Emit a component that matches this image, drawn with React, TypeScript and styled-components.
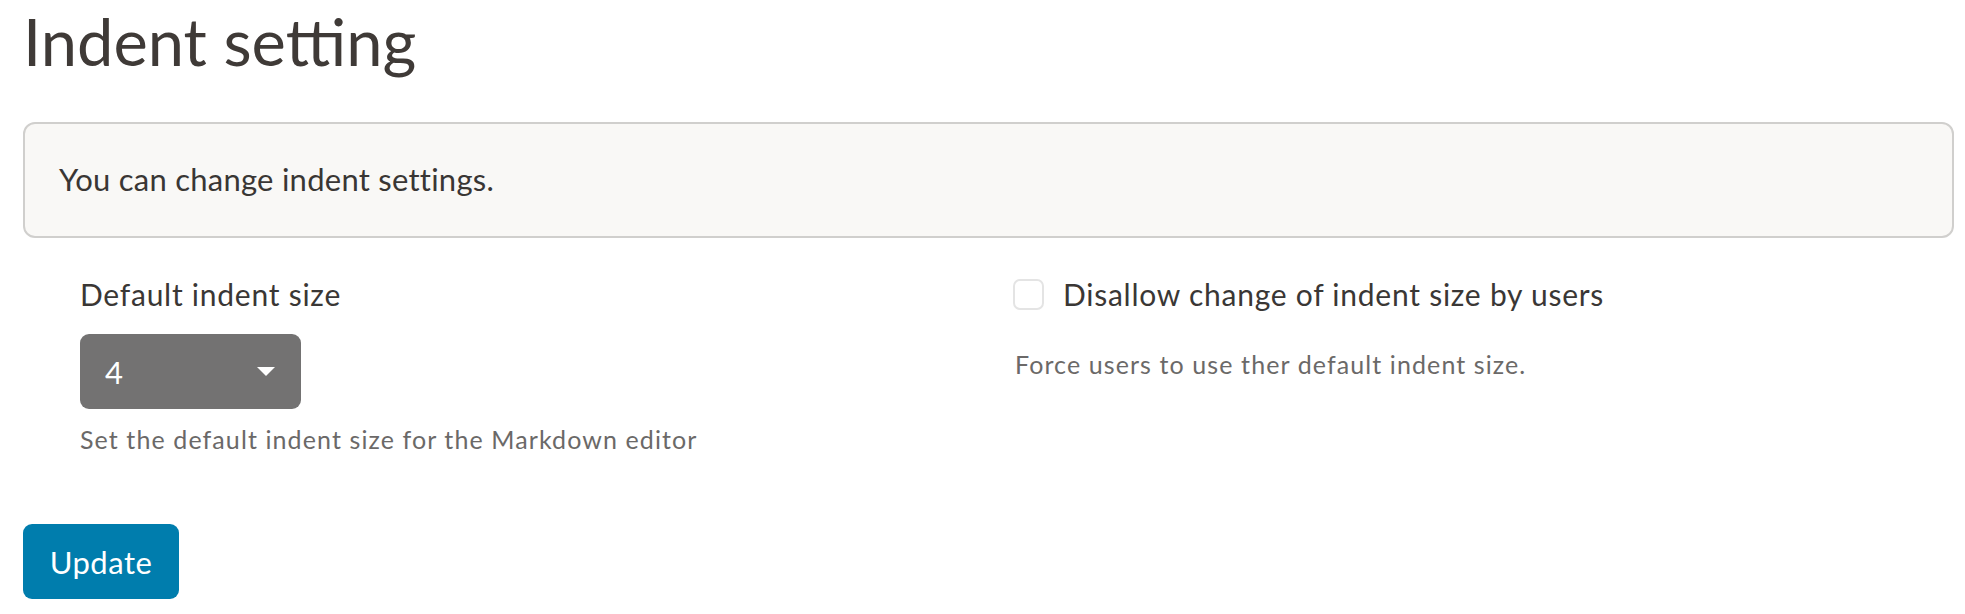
import React from "react";
import styled, { createGlobalStyle } from "styled-components";

const GlobalStyle = createGlobalStyle`
  html, body {
    margin: 0;
    padding: 0;
    background: #ffffff;
  }
  body {
    font-family: Lato, "Noto Sans", "Liberation Sans", sans-serif;
    color: #3a3735;
  }
`;

const App: React.FC = () => {
  return (
    <Page>
      <GlobalStyle />
      <Title>Indent setting</Title>
      <Notice>You can change indent settings.</Notice>
      <FormRow>
        <Column>
          <Label>Default indent size</Label>
          <Select>
            <span>4</span>
            <Caret width="18" height="9" viewBox="0 0 18 9">
              <path d="M0 0 L18 0 L9 9 Z" fill="#ffffff" />
            </Caret>
          </Select>
          <Help $top={17}>Set the default indent size for the Markdown editor</Help>
        </Column>
        <Column>
          <CheckRow>
            <Checkbox />
            <Label>Disallow change of indent size by users</Label>
          </CheckRow>
          <Help $top={39} $left={2}>
            Force users to use ther default indent size.
          </Help>
        </Column>
      </FormRow>
      <Button>Update</Button>
    </Page>
  );
};

export default App;

const Page = styled.div`
  padding: 2px 11px 0 23px;
`;

const Title = styled.h1`
  margin: 0;
  font-size: 65px;
  line-height: 78px;
  font-weight: 400;
  color: #3f3a37;
`;

const Notice = styled.div`
  margin-top: 42px;
  padding: 37px 34px 38px;
  background: #f9f8f6;
  border: 2px solid #d0cfcd;
  border-radius: 12px;
  font-size: 31px;
  line-height: 1.2;
  letter-spacing: 0.25px;
  color: #393634;
`;

const FormRow = styled.div`
  display: grid;
  grid-template-columns: 1fr 1fr;
  padding: 0 8px 0 57px;
  margin-top: 39px;
`;

const Column = styled.div`
  display: flex;
  flex-direction: column;
  align-items: flex-start;
`;

const Label = styled.div`
  font-size: 30px;
  line-height: 35px;
  letter-spacing: 0.75px;
  color: #3a3735;
`;

const Select = styled.div`
  margin-top: 22px;
  width: 221px;
  height: 75px;
  box-sizing: border-box;
  padding: 0 26px 0 25px;
  display: flex;
  align-items: center;
  justify-content: space-between;
  background: #737272;
  border-radius: 9px;
  color: #ffffff;
  font-size: 31px;
`;

const Caret = styled.svg`
  display: block;
`;

const Help = styled.div<{ $top: number; $left?: number }>`
  margin-top: ${(p) => p.$top}px;
  margin-left: ${(p) => p.$left ?? 0}px;
  font-size: 25px;
  line-height: 27px;
  letter-spacing: 1.1px;
  color: #6b6968;
`;

const CheckRow = styled.div`
  display: flex;
  align-items: center;
  gap: 19px;
`;

const Checkbox = styled.div`
  width: 31px;
  height: 31px;
  box-sizing: border-box;
  border: 2px solid #e4e4e4;
  border-radius: 7px;
  background: #ffffff;
`;

const Button = styled.button`
  margin-top: 71px;
  width: 156px;
  height: 75px;
  border: none;
  border-radius: 9px;
  background: #007dad;
  color: #ffffff;
  font-family: Lato, "Noto Sans", "Liberation Sans", sans-serif;
  font-size: 31px;
  letter-spacing: 0.5px;
  padding: 0;
  cursor: pointer;
`;
